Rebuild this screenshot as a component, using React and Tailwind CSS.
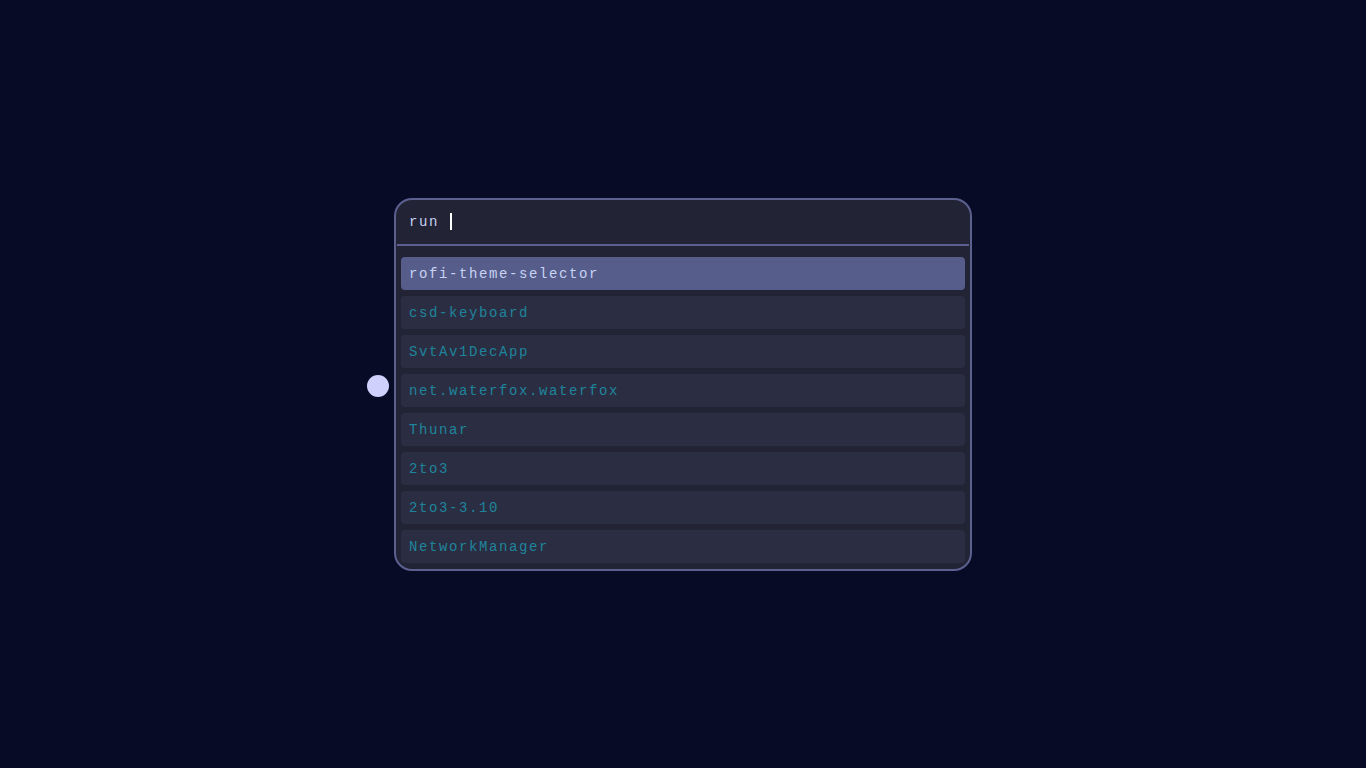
import React from "react";

const items = [
  "rofi-theme-selector",
  "csd-keyboard",
  "SvtAv1DecApp",
  "net.waterfox.waterfox",
  "Thunar",
  "2to3",
  "2to3-3.10",
  "NetworkManager",
];

function App() {
  return (
    <div className="min-h-screen w-full bg-[#070b25] flex items-center justify-center font-['Liberation_Mono',monospace] text-[14px] tracking-[1.6px]">
      <div className="relative w-[578px] h-[373px] border-2 border-[#5b608f] rounded-[18px] bg-[#222436]">
        <div className="absolute left-[-29px] top-[175px] w-[22px] h-[22px] rounded-full bg-[#cfd0fb]" />
        <div className="h-[46px] mx-px border-b-2 border-[#5b608f] flex items-center pl-[12px] pt-[2px]">
          <span className="whitespace-pre text-[#c8d3f5]">run </span>
          <span className="ml-[1px] mb-[2px] w-[2px] h-[17px] bg-white" />
        </div>
        <div className="flex flex-col gap-[6px] px-[5px] pt-[11px]">
          {items.map((item, i) => (
            <div
              key={item}
              className={
                i === 0
                  ? "h-[33px] rounded-[4px] bg-[#565d8a] flex items-center px-[8px] pt-[2px] text-[#c8d3f5]"
                  : "h-[33px] rounded-[4px] bg-[#2b2e42] flex items-center px-[8px] pt-[2px] text-[#1e849c]"
              }
            >
              {item}
            </div>
          ))}
        </div>
      </div>
    </div>
  );
}

export default App;
